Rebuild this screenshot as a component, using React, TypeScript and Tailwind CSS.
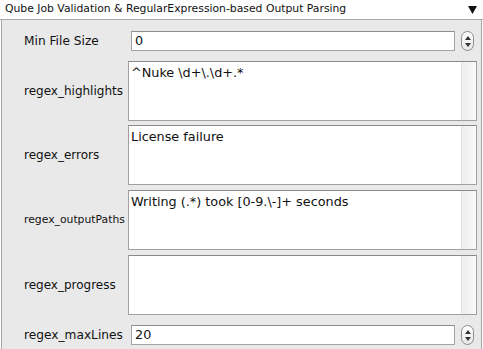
import React from "react";

const font = { fontFamily: '"DejaVu Sans", "Liberation Sans", sans-serif' };

function Spinner() {
  return (
    <div className="ml-[6px] flex h-[20px] w-[13px] flex-col items-center justify-center gap-[3px] rounded-full border border-[#8c8c8c] bg-gradient-to-b from-[#ffffff] to-[#e6e6e6]">
      <svg width="6" height="4" viewBox="0 0 6 4"><path d="M3 0 L6 4 L0 4 Z" fill="#333" /></svg>
      <svg width="6" height="4" viewBox="0 0 6 4"><path d="M0 0 L6 0 L3 4 Z" fill="#333" /></svg>
    </div>
  );
}

function NumberRow({ label, value, mt }: { label: string; value: string; mt: string }) {
  return (
    <div className={`flex items-center ${mt}`}>
      <div className="w-[129px] shrink-0 whitespace-nowrap pl-[22px] text-[12.2px] text-[#111]">{label}</div>
      <div className="flex h-[20px] w-[324px] shrink-0 items-center border border-[#a4a4a4] border-t-[#8e8e8e] bg-white pl-[3px] text-[12.8px] text-[#111]">
        {value}
      </div>
      <Spinner />
    </div>
  );
}

function AreaRow({ label, value, mt, small }: { label: string; value: string; mt: string; small?: boolean }) {
  return (
    <div className={`flex items-center ${mt}`}>
      <div className={`w-[126px] shrink-0 whitespace-nowrap pl-[22px] text-[#111] ${small ? "text-[10.8px]" : "text-[12px]"}`}>{label}</div>
      <div className="flex h-[60px] w-[349px] shrink-0 border border-[#a0a0a0] border-t-[#8a8a8a] bg-white">
        <div className="flex-1 whitespace-nowrap pl-[2px] pt-[3px] text-[12.8px] leading-[16px] text-[#111]">{value}</div>
        <div className="w-[15px] border-l border-[#e4e4e4] bg-gradient-to-r from-[#eeeeee] to-[#f9f9f9]" />
      </div>
    </div>
  );
}

export default function App() {
  return (
    <div className="h-[349px] w-[483px] overflow-hidden bg-white" style={font}>
      <div className="flex h-[20px] items-center justify-between border-b border-[#a8a8a8] bg-white pl-[5px] pr-[6px] text-[10.8px] text-[#111]">
        <span>Qube Job Validation &amp; RegularExpression-based Output Parsing</span>
        <svg width="9" height="8" viewBox="0 0 9 8"><path d="M0 0 L9 0 L4.5 8 Z" fill="#111" /></svg>
      </div>
      <div className="ml-[1px] mr-[1px] h-[329px] border-x border-[#a6a6a6] bg-[#e9e9e9]">
        <div className="flex flex-col">
          <NumberRow label="Min File Size" value="0" mt="mt-[11px]" />
          <AreaRow label="regex_highlights" value={"^Nuke \\d+\\.\\d+.*"} mt="mt-[10px]" />
          <AreaRow label="regex_errors" value="License failure" mt="mt-[4px]" />
          <AreaRow label="regex_outputPaths" value={"Writing (.*) took [0-9.\\-]+ seconds"} mt="mt-[5px]" small />
          <AreaRow label="regex_progress" value="" mt="mt-[5px]" />
          <NumberRow label="regex_maxLines" value="20" mt="mt-[10px]" />
        </div>
      </div>
    </div>
  );
}
